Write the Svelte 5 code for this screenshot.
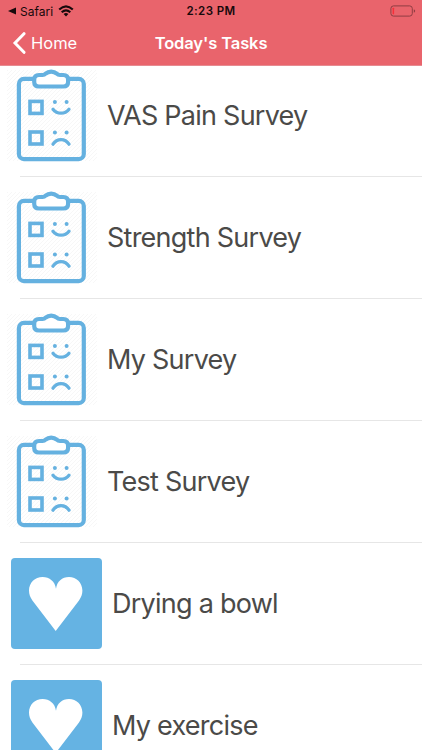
<script>
  const tasks = [
    { title: 'VAS Pain Survey', type: 'survey' },
    { title: 'Strength Survey', type: 'survey' },
    { title: 'My Survey', type: 'survey' },
    { title: 'Test Survey', type: 'survey' },
    { title: 'Drying a bowl', type: 'exercise' },
    { title: 'My exercise', type: 'exercise' }
  ]
</script>

<div class="screen">
  <header>
    <div class="status">
      <div class="source">
        <svg class="caret" width="8" height="8" viewBox="0 0 8 8"><path d="M0 4L8 0.5V7.5Z" /></svg>
        <span>Safari</span>
        <svg class="wifi" width="16" height="12" viewBox="0 0 16 12">
          <path d="M1.2 4.6Q8-1.8 14.8 4.6M3.7 7.3Q8 3.3 12.3 7.3" fill="none" stroke="#17090b" stroke-width="2.1" />
          <path d="M5.6 9.1Q8 7 10.4 9.1L8 11.6Z" />
        </svg>
      </div>
      <span class="time">2:23 PM</span>
      <svg class="battery" width="26" height="12" viewBox="0 0 26 12">
        <rect x="0.9" y="0.9" width="21.4" height="10.2" rx="2.6" fill="none" stroke="#8f3d43" />
        <rect x="2.6" y="2.7" width="1.5" height="6.6" rx="0.6" fill="#f7303a" />
        <path d="M23.8 4.2Q25.2 4.7 25.2 6T23.8 7.8Z" fill="#8f3d43" />
      </svg>
    </div>
    <nav>
      <button class="back">
        <svg width="14" height="22" viewBox="0 0 14 22"><path d="M12 1.7L3 11L12 20.3" /></svg>
        <span>Home</span>
      </button>
      <h1>Today's Tasks</h1>
    </nav>
  </header>

  <ul>
    {#each tasks as task}
      <li class={task.type}>
        {#if task.type === 'survey'}
          <svg class="clipboard" width="90" height="94" viewBox="7 10 90 94">
            <defs>
              <pattern id="hatch" width="4" height="4" patternUnits="userSpaceOnUse">
                <path d="M-1 1L1 -1M0 4L4 0M3 5L5 3" stroke="#f4f4f4" stroke-width="0.7" />
              </pattern>
            </defs>
            <rect x="7" y="12" width="90" height="91" fill="url(#hatch)" />
            <g fill="none" stroke="#65b1e0" stroke-width="4.2" stroke-linecap="round">
              <rect x="18.9" y="20.9" width="64.9" height="80.2" rx="5" />
              <path
                class="clip"
                d="M39 17H42.5Q44.4 17 45.6 15.7Q48 13.6 51.2 13.6T56.8 15.7Q58 17 60 17H63.3Q68.1 17 68.1 21.8V23.8Q68.1 28.5 63.3 28.5H39Q34.2 28.5 34.2 23.8V21.8Q34.2 17 39 17Z"
              />
              <rect x="30" y="43.4" width="12" height="12" stroke-width="3.6" />
              <rect x="30" y="74" width="12" height="12" stroke-width="3.6" />
              <path d="M53 51.2Q56 55.2 61 55.2T69 51.2M53 86.2Q56 81.6 61 81.6T69 86.2" stroke-width="3.3" />
            </g>
            <g fill="#65b1e0">
              <circle cx="54.9" cy="43.9" r="2" />
              <circle cx="66.6" cy="43.9" r="2" />
              <circle cx="54.9" cy="74.4" r="2" />
              <circle cx="66.6" cy="74.4" r="2" />
            </g>
          </svg>
        {:else}
          <div class="tile">
            <svg width="54" height="54" viewBox="0 0 54 54">
              <path d="M27 11.7C26 4.5 20.5 0 13.6 0C6 0 0 5.8 0 13.5C0 17.5 1.2 20.3 3.4 23.4L26.7 54L50 23.4C52.2 20.3 53.4 17.5 53.4 13.5C53.4 5.8 47.4 0 40 0C33 0 28 4.5 27 11.7Z" />
            </svg>
          </div>
        {/if}
        <span class="title">{task.title}</span>
      </li>
    {/each}
  </ul>
</div>

<style>
  :global(body) {
    margin: 0;
    overflow: hidden;
  }

  .screen {
    display: flex;
    flex-direction: column;
    width: 422px;
    height: 750px;
    overflow: hidden;
    background: #fff;
    font-family: Inter, Roboto, sans-serif;
  }

  header {
    flex: none;
    height: 66px;
    box-sizing: border-box;
    border-bottom: 1px solid #e68b91;
    background: #e9646c;
  }

  .status,
  nav {
    display: grid;
    grid-template-columns: 1fr auto 1fr;
    align-items: center;
  }

  .status {
    height: 22px;
    padding: 0 6px 0 8px;
    color: #17090b;
    fill: #17090b;
    font-size: 12px;
  }

  .source {
    display: flex;
    align-items: center;
  }

  .source span {
    margin: 0 5px 0 4px;
  }

  .time {
    margin-right: 2px;
    font-size: 11.5px;
    font-weight: 600;
    letter-spacing: 0.4px;
  }

  .battery {
    justify-self: end;
  }

  nav {
    height: 42px;
    padding: 0 12px;
    color: #fff;
  }

  .back {
    display: flex;
    align-items: center;
    gap: 5px;
    padding: 0;
    border: 0;
    background: none;
    color: inherit;
    font: 16.5px Inter, Roboto, sans-serif;
  }

  .back path {
    fill: none;
    stroke: #fff;
    stroke-width: 3;
    stroke-linecap: round;
  }

  h1 {
    margin: 0;
    font-size: 16.5px;
    font-weight: 600;
    letter-spacing: -0.1px;
  }

  ul {
    flex: 1;
    min-height: 0;
    margin: 0;
    padding: 0;
    overflow: hidden;
    list-style: none;
  }

  li {
    display: flex;
    align-items: center;
    height: 122px;
    box-sizing: border-box;
    padding-left: 7px;
    background: linear-gradient(#e6e6e6, #e6e6e6) 20px 100% / 100% 1px no-repeat;
  }

  /* the list is scrolled a little under the header */
  li:first-child {
    margin-top: -11.5px;
  }

  .clipboard {
    margin-bottom: 2px;
  }

  .clip {
    fill: #fff;
  }

  .title {
    margin-left: 10px;
    color: #4b4a48;
    font-size: 27px;
    letter-spacing: -0.75px;
    white-space: nowrap;
  }

  .exercise {
    padding-left: 10.5px;
  }

  .tile {
    display: flex;
    align-items: center;
    justify-content: center;
    width: 91.5px;
    height: 91.5px;
    border-radius: 4px;
    background: #65b3e3;
  }

  .tile path {
    fill: #fff;
  }
</style>
